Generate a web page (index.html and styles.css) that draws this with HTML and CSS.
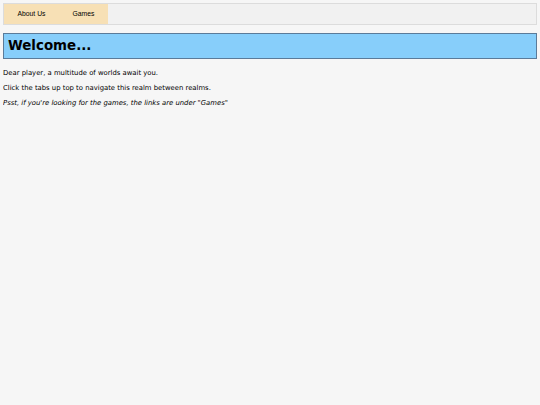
FILE: index.html
```html
<!DOCTYPE html>
<html>
<head>
<meta charset="utf-8">
<link rel="stylesheet" href="styles.css">
</head>
<body>
<div class="tabbar">
  <div class="tab">About Us</div>
  <div class="tab">Games</div>
</div>
<h1 class="title">Welcome...</h1>
<p class="text">Dear player, a multitude of worlds await you.</p>
<p class="text">Click the tabs up top to navigate this realm between realms.</p>
<p class="text note">Psst, if you're looking for the games, the links are under "Games"</p>
</body>
</html>
```
FILE: styles.css
```css
html, body {
  background: #f6f6f6;
}
body {
  margin: 3px;
  font-family: "DejaVu Sans", Verdana, sans-serif;
  color: #000;
}
.tabbar {
  display: flex;
  border: 1px solid #dcdcdc;
  background: #f1f1f1;
  height: 20px;
}
.tab {
  background: #f7e0b5;
  font-family: "Liberation Sans", Arial, sans-serif;
  font-size: 6.8px;
  line-height: 20px;
  padding: 0 13.5px;
}
.title {
  margin: 8px 0 0;
  border: 1px solid #5b7b99;
  background: #87cefa;
  font-size: 13.4px;
  font-weight: bold;
  line-height: 24px;
  padding: 0 4px;
}
.text {
  font-size: 6.85px;
  line-height: 8px;
  margin: 7px 0 0;
}
.text:first-of-type {
  margin-top: 10px;
}
.note {
  font-style: italic;
}
```
